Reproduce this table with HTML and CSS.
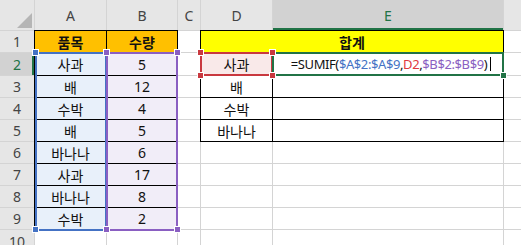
FILE: index.html
```html
<!DOCTYPE html>
<html lang="ko">
<head>
    <meta charset="UTF-8">
    <title>SUMIF</title>
    <link rel="stylesheet" href="styles.css">
</head>
<body>
    <div class="sheet">
        <!-- column headers -->
        <div class="hd corner"><span class="tri"></span></div>
        <div class="hd">A</div>
        <div class="hd">B</div>
        <div class="hd">C</div>
        <div class="hd">D</div>
        <div class="hd sel-col">E</div>
        <div class="hd">F</div>

        <div class="hd">1</div>
        <div class="c bx title-a">품목</div>
        <div class="c bx title-a">수량</div>
        <div class="c"></div>
        <div class="c bx title-d span2">합계</div>
        <div class="c"></div>

        <div class="hd sel-row">2</div>
        <div class="c bx ref-a">사과</div>
        <div class="c bx ref-b">5</div>
        <div class="c"></div>
        <div class="c bx ref-d">사과</div>
        <div class="c bx formula">=SUMIF(<span class="f-a">$A$2:$A$9</span>,<span class="f-d">D2</span>,<span class="f-b">$B$2:$B$9</span>)<span class="caret"></span></div>
        <div class="c"></div>

        <div class="hd">3</div>
        <div class="c bx ref-a">배</div>
        <div class="c bx ref-b">12</div>
        <div class="c"></div>
        <div class="c bx">배</div>
        <div class="c bx"></div>
        <div class="c"></div>

        <div class="hd">4</div>
        <div class="c bx ref-a">수박</div>
        <div class="c bx ref-b">4</div>
        <div class="c"></div>
        <div class="c bx">수박</div>
        <div class="c bx"></div>
        <div class="c"></div>

        <div class="hd">5</div>
        <div class="c bx ref-a">배</div>
        <div class="c bx ref-b">5</div>
        <div class="c"></div>
        <div class="c bx">바나나</div>
        <div class="c bx"></div>
        <div class="c"></div>

        <div class="hd">6</div>
        <div class="c bx ref-a">바나나</div>
        <div class="c bx ref-b">6</div>
        <div class="c"></div>
        <div class="c"></div>
        <div class="c"></div>
        <div class="c"></div>

        <div class="hd">7</div>
        <div class="c bx ref-a">사과</div>
        <div class="c bx ref-b">17</div>
        <div class="c"></div>
        <div class="c"></div>
        <div class="c"></div>
        <div class="c"></div>

        <div class="hd">8</div>
        <div class="c bx ref-a">바나나</div>
        <div class="c bx ref-b">8</div>
        <div class="c"></div>
        <div class="c"></div>
        <div class="c"></div>
        <div class="c"></div>

        <div class="hd">9</div>
        <div class="c bx ref-a">수박</div>
        <div class="c bx ref-b">2</div>
        <div class="c"></div>
        <div class="c"></div>
        <div class="c"></div>
        <div class="c"></div>

        <div class="hd">10</div>
        <div class="c"></div>
        <div class="c"></div>
        <div class="c"></div>
        <div class="c"></div>
        <div class="c"></div>
        <div class="c"></div>

        <!-- reference frames drawn over the cells while editing E2 -->
        <div class="rng rng-a"></div>
        <div class="rng rng-b"></div>
        <div class="rng rng-d"></div>
        <div class="rng rng-sel"></div>

        <span class="hdl h-blue" style="left: 32px; top: 49px;"></span>
        <span class="hdl h-blue" style="left: 32px; top: 226px;"></span>
        <span class="hdl h-purple" style="left: 103px; top: 49px;"></span>
        <span class="hdl h-purple" style="left: 174px; top: 49px;"></span>
        <span class="hdl h-purple" style="left: 103px; top: 226px;"></span>
        <span class="hdl h-purple" style="left: 174px; top: 226px;"></span>
        <span class="hdl h-red" style="left: 197px; top: 49px;"></span>
        <span class="hdl h-red" style="left: 269px; top: 49px;"></span>
        <span class="hdl h-red" style="left: 197px; top: 72px;"></span>
        <span class="hdl h-red" style="left: 269px; top: 72px;"></span>
        <span class="hdl h-green" style="left: 500px; top: 72px;"></span>
    </div>
</body>
</html>
```

FILE: styles.css
```css
:root {
    --grid-line: #d4d4d4;
    --header-bg: #e6e6e6;
    --header-sel: #d2d2d2;
    --green: #217346;
    --blue: #4472c4;
    --purple: #8a5fc2;
    --red: #c9383f;
}

body {
    margin: 0;
    background-color: #fff;
    overflow: hidden;
    font-family: "Noto Sans", "Noto Sans CJK KR", sans-serif;
}

.sheet {
    position: relative;
    display: grid;
    grid-template-columns: 34px 71px 70px 22px 71px 230px 72px;
    grid-template-rows: 30px 21px 22px repeat(7, 21px) 22px;
    gap: 1px;
    width: 576px;
    background-color: var(--grid-line);
}

.hd,
.c {
    display: flex;
    align-items: center;
    justify-content: center;
    font-size: 14px;
    white-space: nowrap;
}

.hd {
    background-color: var(--header-bg);
    color: #444;
}

.c {
    background-color: #fff;
    color: #111;
}

.corner {
    position: relative;
}

.tri {
    position: absolute;
    right: 2px;
    bottom: 2px;
    width: 0;
    height: 0;
    border-left: 15px solid transparent;
    border-bottom: 15px solid #b5b5b5;
}

.sel-col {
    background-color: var(--header-sel);
    color: var(--green);
    box-shadow: inset 0 -2px 0 var(--green);
}

.sel-row {
    background-color: var(--header-sel);
    color: var(--green);
    box-shadow: inset -2px 0 0 var(--green);
}

/* thin black cell borders */
.bx {
    box-shadow: 0 0 0 1px #000;
}

.title-a {
    background-color: #ffc000;
    font-weight: bold;
}

.title-d {
    background-color: #ffff00;
    font-weight: bold;
}

.span2 {
    grid-column: span 2;
}

.ref-a {
    background-color: #e8f0fa;
}

.ref-b {
    background-color: #f1edf8;
}

.ref-d {
    background-color: #f9e9e9;
}

.formula {
    position: relative;
    z-index: 1;
    font-size: 13px;
    letter-spacing: -0.4px;
    padding-left: 6px;
}

.f-a { color: var(--blue); }
.f-b { color: var(--purple); }
.f-d { color: #e0393e; }

.caret {
    display: inline-block;
    width: 1px;
    height: 14px;
    margin-left: 3px;
    background-color: #000;
}

.rng {
    position: absolute;
    box-sizing: border-box;
    border: 2px solid;
    z-index: 2;
}

.rng-a {
    left: 35px;
    top: 52px;
    width: 72px;
    height: 179px;
    border-color: var(--blue);
}

.rng-b {
    left: 106px;
    top: 52px;
    width: 72px;
    height: 179px;
    border-color: var(--purple);
}

.rng-d {
    left: 200px;
    top: 52px;
    width: 73px;
    height: 24px;
    border-color: var(--red);
}

.rng-sel {
    left: 272px;
    top: 52px;
    width: 232px;
    height: 24px;
    border-color: var(--green);
}

.hdl {
    position: absolute;
    width: 5px;
    height: 5px;
    border: 1px solid #fff;
    z-index: 3;
}

.h-blue { background-color: var(--blue); }
.h-purple { background-color: var(--purple); }
.h-red { background-color: var(--red); }
.h-green { background-color: var(--green); }
```
